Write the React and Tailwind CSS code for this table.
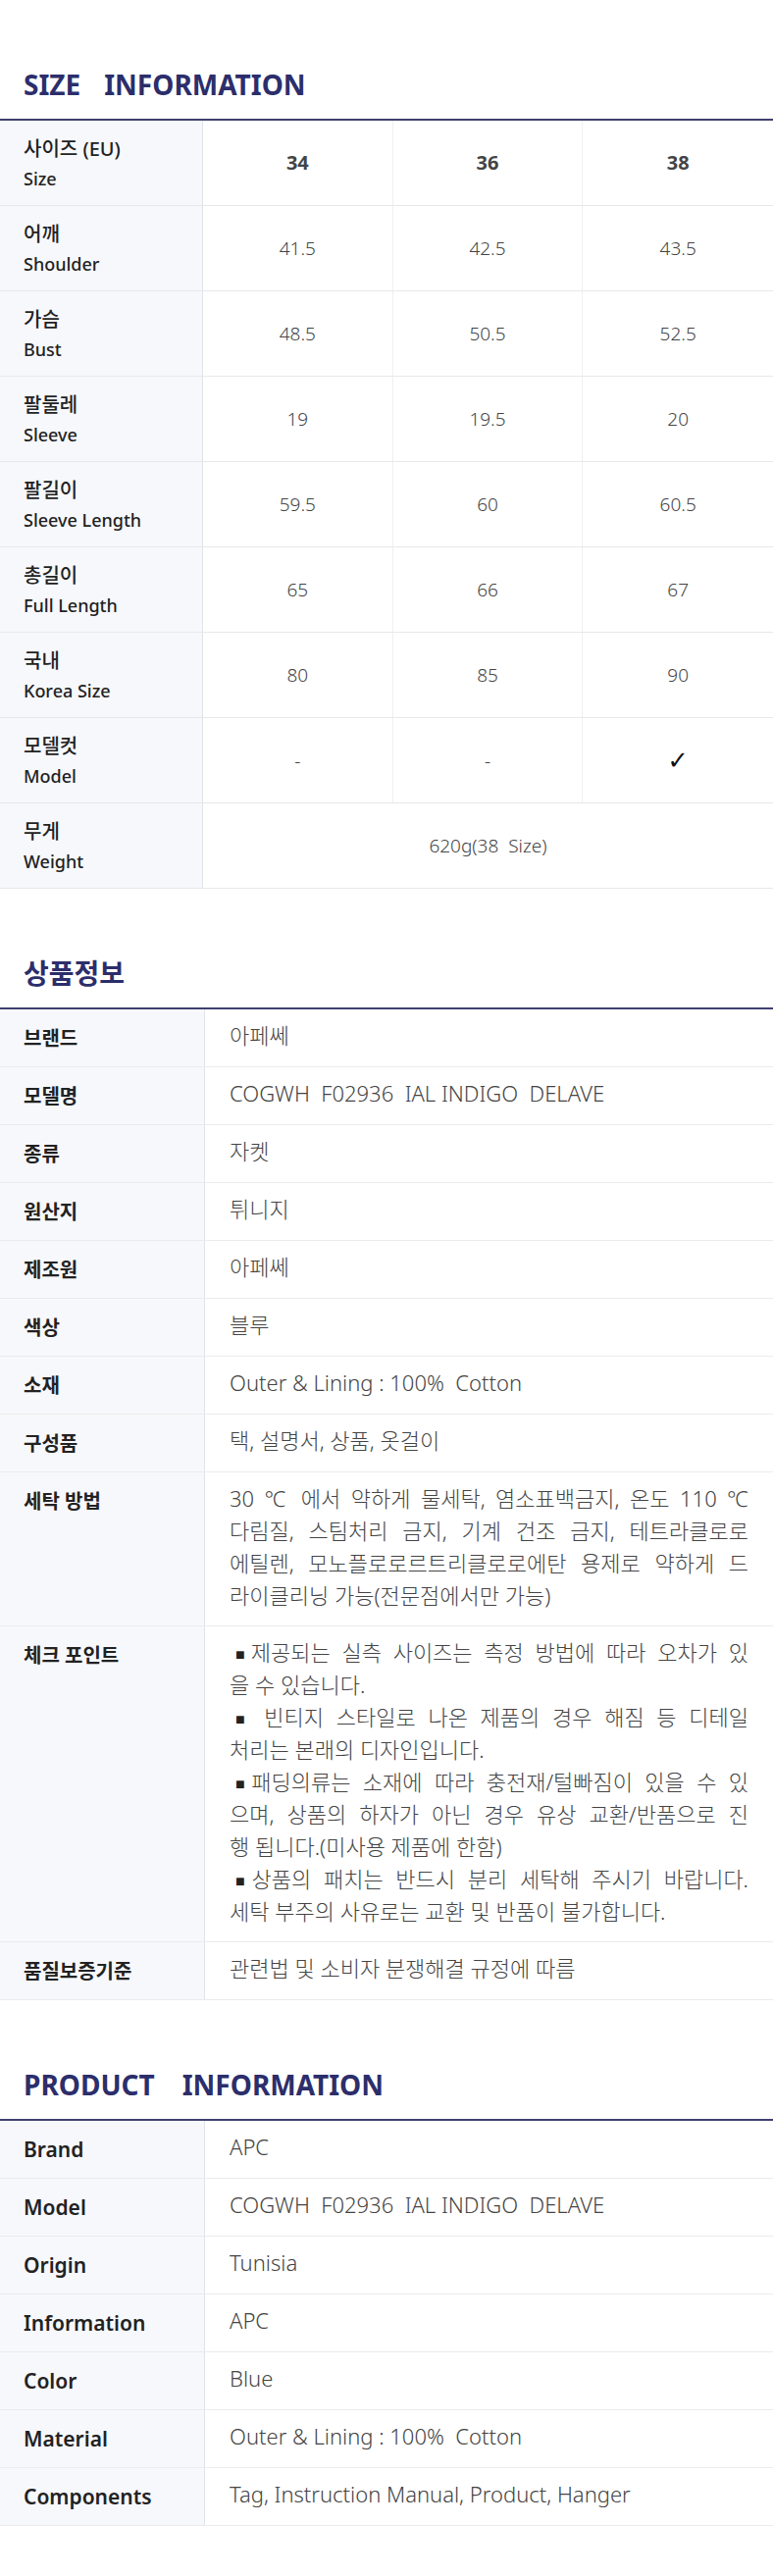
import React from "react";

// 사이즈 표
const sizeRows = [
  { ko: "어깨", en: "Shoulder", v: ["41.5", "42.5", "43.5"] },
  { ko: "가슴", en: "Bust", v: ["48.5", "50.5", "52.5"] },
  { ko: "팔둘레", en: "Sleeve", v: ["19", "19.5", "20"] },
  { ko: "팔길이", en: "Sleeve Length", v: ["59.5", "60", "60.5"] },
  { ko: "총길이", en: "Full Length", v: ["65", "66", "67"] },
  { ko: "국내", en: "Korea Size", v: ["80", "85", "90"] },
  { ko: "모델컷", en: "Model", v: ["-", "-", "✓"] },
];

// 작은 네모 (체크 포인트 머리표)
const Sq = () => (
  <span className="font-['DejaVu_Sans'] text-[16px] leading-none align-[1px] ml-[6px] text-[#222]">■</span>
);

// 상품정보 (문단 -> 줄)
const infoRows = [
  { label: "브랜드", paras: [["아페쎄"]] },
  { label: "모델명", paras: [["COGWH  F02936  IAL INDIGO  DELAVE"]] },
  { label: "종류", paras: [["자켓"]] },
  { label: "원산지", paras: [["튀니지"]] },
  { label: "제조원", paras: [["아페쎄"]] },
  { label: "색상", paras: [["블루"]] },
  { label: "소재", paras: [["Outer & Lining : 100%  Cotton"]] },
  { label: "구성품", paras: [["택, 설명서, 상품, 옷걸이"]] },
  {
    label: "세탁 방법",
    paras: [
      [
        "30 ℃ 에서 약하게 물세탁, 염소표백금지, 온도 110 ℃",
        "다림질, 스팀처리 금지, 기계 건조 금지, 테트라클로로",
        "에틸렌, 모노플로로르트리클로로에탄 용제로 약하게 드",
        "라이클리닝 가능(전문점에서만 가능)",
      ],
    ],
  },
  {
    label: "체크 포인트",
    paras: [
      [<><Sq />제공되는 실측 사이즈는 측정 방법에 따라 오차가 있</>, "을 수 있습니다."],
      [<><Sq /> 빈티지 스타일로 나온 제품의 경우 해짐 등 디테일</>, "처리는 본래의 디자인입니다."],
      [
        <><Sq />패딩의류는 소재에 따라 충전재/털빠짐이 있을 수 있</>,
        "으며, 상품의 하자가 아닌 경우 유상 교환/반품으로 진",
        "행 됩니다.(미사용 제품에 한함)",
      ],
      [<><Sq />상품의 패치는 반드시 분리 세탁해 주시기 바랍니다.</>, "세탁 부주의 사유로는 교환 및 반품이 불가합니다."],
    ],
  },
  { label: "품질보증기준", paras: [["관련법 및 소비자 분쟁해결 규정에 따름"]] },
];

const productRows = [
  { label: "Brand", paras: [["APC"]] },
  { label: "Model", paras: [["COGWH  F02936  IAL INDIGO  DELAVE"]] },
  { label: "Origin", paras: [["Tunisia"]] },
  { label: "Information", paras: [["APC"]] },
  { label: "Color", paras: [["Blue"]] },
  { label: "Material", paras: [["Outer & Lining : 100%  Cotton"]] },
  { label: "Components", paras: [["Tag, Instruction Manual, Product, Hanger"]] },
];

const Title = ({ children }) => (
  <h2 className="px-6 text-[28px] leading-[28px] font-bold text-[#2c2e6b] whitespace-nowrap">
    {children}
  </h2>
);

const InfoRow = ({ label, paras, en }) => (
  <div className="grid grid-cols-[209px_1fr] border-b border-[#ebebeb]">
    <div
      className={`bg-[#f7f8fc] border-r border-[#e1e3ea] pl-6 pt-[13px] pb-3 leading-[33px] text-[#222] ${
        en ? "text-[21px] font-semibold" : "text-[20px] font-bold"
      }`}
    >
      {label}
    </div>
    <div className="pl-[25px] pr-[25px] pt-[10px] pb-[14px] text-[22px] leading-[33px] font-light text-[#444]">
      {paras.map((lines, p) => (
        <div key={p}>
          {lines.map((line, i) => (
            <div
              key={i}
              className={
                i < lines.length - 1
                  ? "h-[33px] text-justify [text-align-last:justify] whitespace-nowrap"
                  : "h-[33px] whitespace-pre"
              }
            >
              {line}
            </div>
          ))}
        </div>
      ))}
    </div>
  </div>
);

const SizeLabel = ({ ko, en }) => (
  <div className="bg-[#f7f8fc] border-r border-[#e1e3ea] pl-6 flex flex-col justify-center text-[#222]">
    <span className="text-[20px] leading-[28px] font-medium">{ko}</span>
    <span className="text-[18px] leading-[26px] font-medium mt-[3px]">{en}</span>
  </div>
);

export default function App() {
  return (
    <div className="w-full bg-white pb-[67px] font-['Noto_Sans','Noto_Sans_CJK_KR',sans-serif]">
      {/* SIZE INFORMATION */}
      <section className="pt-[72px]">
        <Title>
          SIZE<span className="ml-6">INFORMATION</span>
        </Title>
        <div className="mt-[21px] border-t-2 border-[#3e4070]">
          {/* header row */}
          <div className="grid grid-cols-[207px_1fr_1fr_1fr] h-[87px] border-b border-[#e8e8e8]">
            <SizeLabel ko="사이즈 (EU)" en="Size" />
            {["34", "36", "38"].map((s) => (
              <div
                key={s}
                className="flex items-center justify-center border-r border-[#f0f0f0] last:border-r-0 text-[20px] font-bold text-[#444]"
              >
                {s}
              </div>
            ))}
          </div>

          {sizeRows.map((row) => (
            <div
              key={row.ko}
              className="grid grid-cols-[207px_1fr_1fr_1fr] h-[87px] border-b border-[#e8e8e8]"
            >
              <SizeLabel ko={row.ko} en={row.en} />
              {row.v.map((val, i) => (
                <div
                  key={i}
                  className={`flex items-center justify-center border-r border-[#f0f0f0] last:border-r-0 ${
                    val === "✓"
                      ? "font-['DejaVu_Sans'] text-[26px] text-[#111]"
                      : "text-[19px] font-light text-[#444]"
                  }`}
                >
                  {val}
                </div>
              ))}
            </div>
          ))}

          {/* 무게 */}
          <div className="grid grid-cols-[207px_1fr] h-[87px] border-b border-[#e8e8e8]">
            <SizeLabel ko="무게" en="Weight" />
            <div className="flex items-center justify-center text-[19px] font-light text-[#444] whitespace-pre">
              {"620g(38  Size)"}
            </div>
          </div>
        </div>
      </section>

      {/* 상품정보 */}
      <section className="pt-[72px]">
        <Title>상품정보</Title>
        <div className="mt-[21px] border-t-2 border-[#3e4070]">
          {infoRows.map((row) => (
            <InfoRow key={row.label} label={row.label} paras={row.paras} />
          ))}
        </div>
      </section>

      {/* PRODUCT INFORMATION */}
      <section className="pt-[72px]">
        <Title>
          PRODUCT<span className="ml-[28px]">INFORMATION</span>
        </Title>
        <div className="mt-[21px] border-t-2 border-[#3e4070]">
          {productRows.map((row) => (
            <InfoRow key={row.label} label={row.label} paras={row.paras} en />
          ))}
        </div>
      </section>
    </div>
  );
}
